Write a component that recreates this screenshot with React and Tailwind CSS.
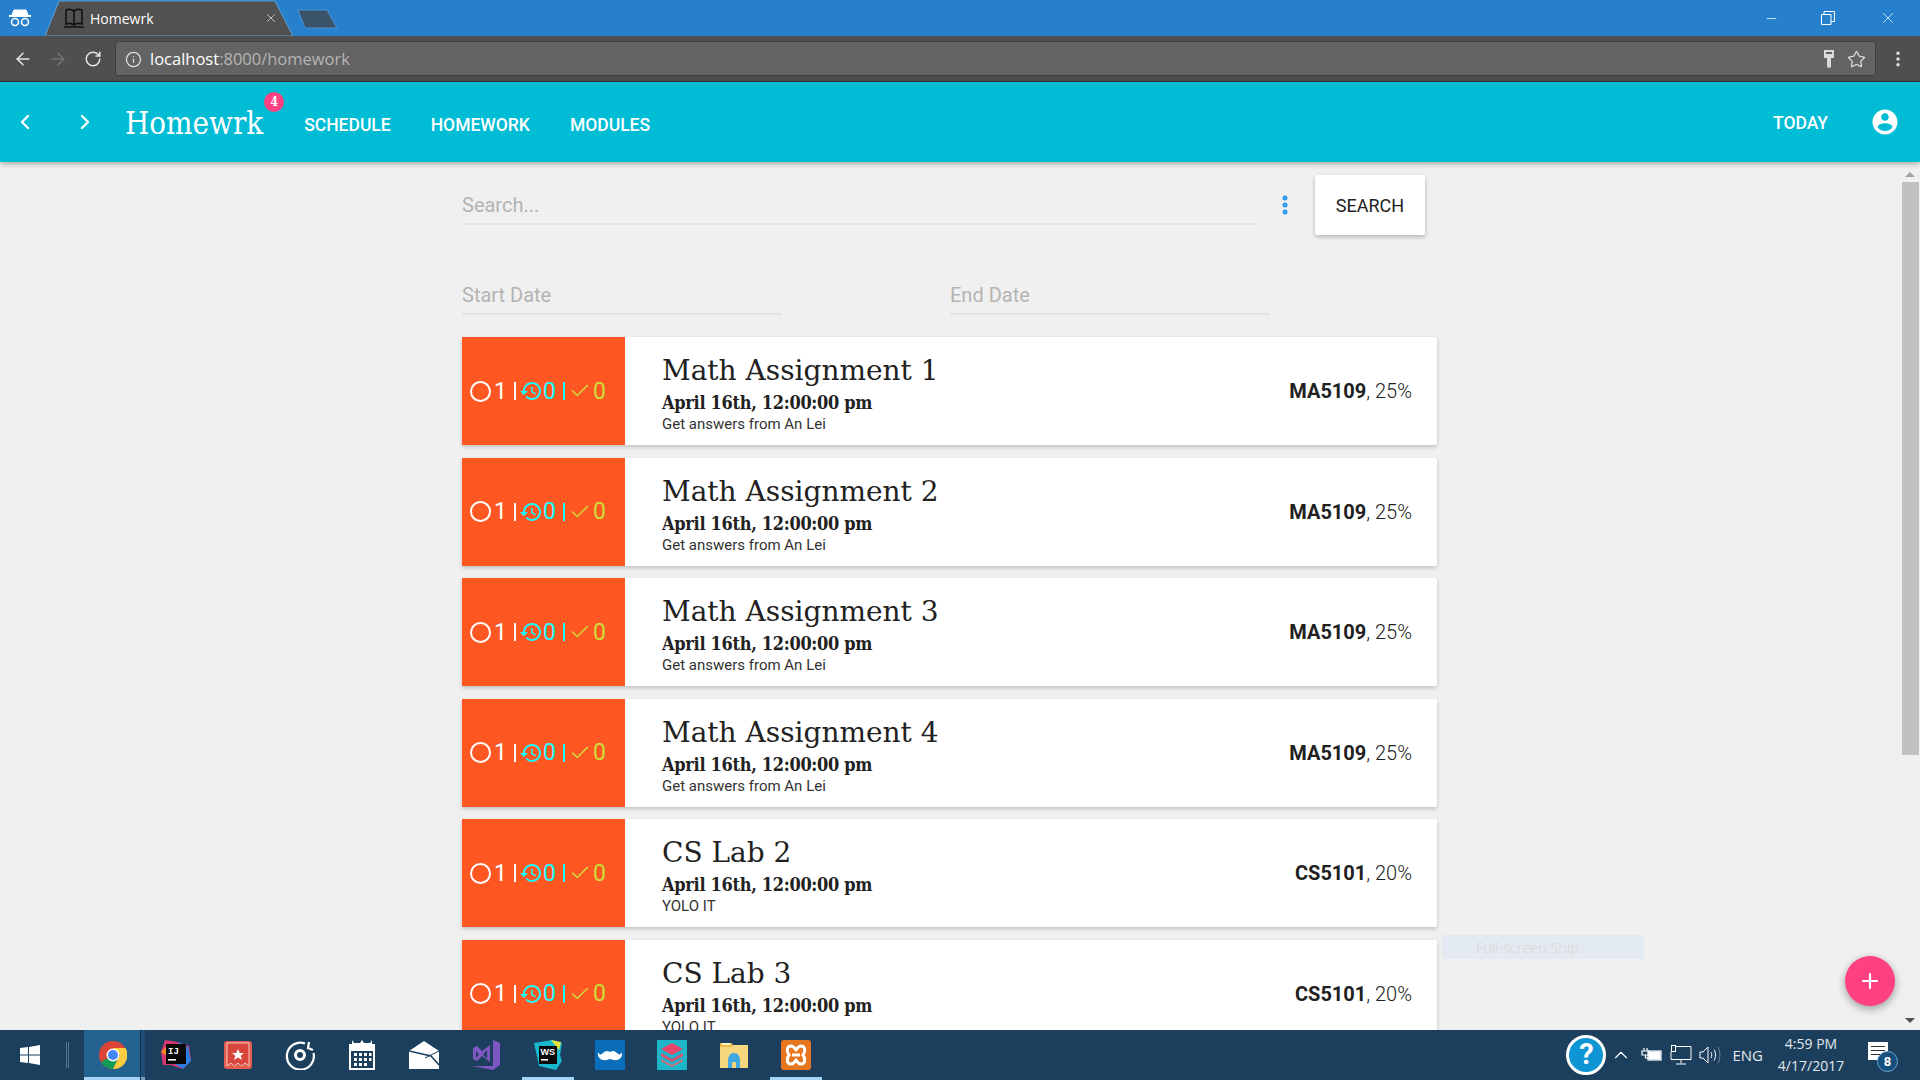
import { ChevronLeft, ChevronRight, ArrowLeft, ArrowRight, RotateCw, Info, Star, EllipsisVertical, X, Minus, Plus, ChevronUp, Check } from 'lucide-react';

const SLAB = "font-['DejaVu_Serif',serif]";
const SLAB_NARROW = "font-['DejaVu_Serif',serif] [font-stretch:condensed]";

const ASSIGNMENTS = [
  { title: 'Math Assignment 1', note: 'Get answers from An Lei', code: 'MA5109', weight: '25%' },
  { title: 'Math Assignment 2', note: 'Get answers from An Lei', code: 'MA5109', weight: '25%' },
  { title: 'Math Assignment 3', note: 'Get answers from An Lei', code: 'MA5109', weight: '25%' },
  { title: 'Math Assignment 4', note: 'Get answers from An Lei', code: 'MA5109', weight: '25%' },
  { title: 'CS Lab 2', note: 'YOLO IT', code: 'CS5101', weight: '20%' },
  { title: 'CS Lab 3', note: 'YOLO IT', code: 'CS5101', weight: '20%' },
];

function HistoryIcon({ className }) {
  return (
    <svg className={className} viewBox="1 3 21 18" fill="currentColor">
      <path d="M13 3c-4.97 0-9 4.03-9 9H1l3.89 3.89.07.14L9 12H6c0-3.87 3.13-7 7-7s7 3.13 7 7-3.13 7-7 7c-1.93 0-3.68-.79-4.94-2.06l-1.42 1.42C8.27 19.99 10.51 21 13 21c4.97 0 9-4.03 9-9s-4.03-9-9-9zm-1 5v5l4.28 2.54.72-1.21-3.5-2.08V8H12z" />
    </svg>
  );
}

function Card({ item }) {
  return (
    <div className="flex h-[108px] shrink-0 rounded-[2px] bg-white shadow-[0_2px_4px_rgba(0,0,0,0.2)]">
      <div className="flex w-[163px] shrink-0 items-center bg-[#ff5722] pl-[8px] text-[23px] leading-none">
        <span className="h-[21px] w-[21px] rounded-full border-2 border-white" />
        <span className="ml-[3px] w-[13px] text-white">1</span>
        <span className="ml-[7px] h-[18px] w-[2px] bg-white" />
        <HistoryIcon className="ml-[4px] h-[18px] w-[21px] text-[#18ffff]" />
        <span className="ml-[2px] w-[13px] text-[#18ffff]">0</span>
        <span className="ml-[7px] h-[18px] w-[2px] bg-[#18ffff]" />
        <Check className="ml-[4px] h-[22px] w-[22px] text-[#cddc39]" strokeWidth={1.6} />
        <span className="ml-[2px] text-[#cddc39]">0</span>
      </div>
      <div className="flex min-w-0 flex-1 flex-col pl-[37px] pt-[17px]">
        <div className={`${SLAB} text-[28px] leading-[34px] text-[#212121]`}>{item.title}</div>
        <div className={`${SLAB_NARROW} mt-[3px] text-[18px] font-bold leading-[24px] tracking-[-0.3px] text-[#212121]`}>April 16th, 12:00:00 pm</div>
        <div className="text-[15px] leading-[18px] text-[#333]">{item.note}</div>
      </div>
      <div className="flex items-center pr-[25px] text-[20px] text-[#212121]">
        <span className="font-bold">{item.code}</span>
        <span className="font-light">, {item.weight}</span>
      </div>
    </div>
  );
}

function TabStrip() {
  return (
    <div className="flex h-[36px] shrink-0 items-start bg-[#2780cc]">
      <svg className="ml-[8px] mt-[8px] h-[20px] w-[24px]" viewBox="0 0 24 20" fill="none" stroke="white">
        <path d="M6 2h12l2 5H4z" fill="white" />
        <path d="M1 8h22" strokeWidth="2" />
        <circle cx="7" cy="14" r="3.5" strokeWidth="1.5" />
        <circle cx="17" cy="14" r="3.5" strokeWidth="1.5" />
      </svg>
      <div className="relative ml-[13px] h-[36px] w-[248px]">
        <svg className="absolute inset-0 h-full w-full" viewBox="0 0 248 36">
          <path d="M0 36 L14 1 H230 L248 36 Z" fill="#515151" stroke="#5aa0dc" strokeWidth="1" />
        </svg>
        <div className="relative flex h-full items-center pl-[18px] pr-[15px]">
          <svg className="h-[22px] w-[22px]" viewBox="0 0 22 22" fill="none" stroke="#111" strokeWidth="1.6">
            <path d="M11 4C9 2.5 6 2 3 3v14c3-1 6-.5 8 1 2-1.5 5-2 8-1V3c-3-1-6-.5-8 1zM11 4v14M1 20h20" />
          </svg>
          <span className="ml-[5px] flex-1 font-['Open_Sans',sans-serif] text-[14px] text-white">Homewrk</span>
          <X className="h-[14px] w-[14px] text-[#cfcfcf]" strokeWidth={1.5} />
        </div>
      </div>
      <svg className="ml-[4px] mt-[9px] h-[20px] w-[42px]" viewBox="0 0 42 20">
        <path d="M1 1 H30 L40 19 H8 Z" fill="#3a5368" stroke="#4c92d2" strokeWidth="1" />
      </svg>
      <div className="ml-auto mr-[2px] flex h-[36px] items-center text-white">
        <div className="flex w-[54px] justify-center"><Minus className="h-[15px] w-[15px]" strokeWidth={1.2} /></div>
        <div className="flex w-[60px] justify-center">
          <svg className="h-[14px] w-[14px]" viewBox="0 0 14 14" fill="none" stroke="white" strokeWidth="1">
            <path d="M.5 3.5h9.5v10H.5zM3 3.5V.5h10.5v10H10" />
          </svg>
        </div>
        <div className="flex w-[60px] justify-center"><X className="h-[18px] w-[18px]" strokeWidth={1} /></div>
      </div>
    </div>
  );
}

function AddressBar() {
  return (
    <div className="flex h-[46px] shrink-0 items-center border-b border-[#333] bg-[#4f4f4f]">
      <ArrowLeft className="ml-[13px] h-[20px] w-[20px] text-[#e6e6e6]" strokeWidth={1.8} />
      <ArrowRight className="ml-[15px] h-[20px] w-[20px] text-[#747474]" strokeWidth={1.8} />
      <RotateCw className="ml-[16px] h-[18px] w-[18px] text-[#e6e6e6]" strokeWidth={2} />
      <div className="ml-[13px] flex h-[35px] flex-1 items-center rounded-[3px] border border-[#3e3e3e] bg-[#636363] pl-[9px] pr-[9px] pt-[1px] font-['Open_Sans',sans-serif] text-[16.5px]">
        <Info className="h-[17px] w-[17px] text-[#e0e0e0]" strokeWidth={1.8} />
        <span className="ml-[8px] text-white">localhost</span>
        <span className="text-[#b5b5b5]">:8000/homework</span>
        <svg className="ml-auto h-[20px] w-[12px]" viewBox="0 0 12 20" fill="#d8d8d8">
          <path d="M1 1h10v8H8v9l-2 1-2-1V9H1z" />
          <rect x="3" y="3" width="6" height="2" fill="#636363" />
        </svg>
        <Star className="ml-[12px] h-[19px] w-[19px] text-[#dcdcdc]" strokeWidth={1.6} />
      </div>
      <div className="flex w-[44px] justify-center">
        <EllipsisVertical className="h-[20px] w-[20px] text-[#e0e0e0]" strokeWidth={2.2} />
      </div>
    </div>
  );
}

function NavBar() {
  return (
    <div className="relative z-10 flex h-[80px] shrink-0 items-center bg-[#00bcd4] text-white shadow-[0_2px_5px_rgba(0,0,0,0.3)]">
      <ChevronLeft className="ml-[13px] h-[24px] w-[24px]" strokeWidth={2.4} />
      <ChevronRight className="ml-[36px] h-[24px] w-[24px]" strokeWidth={2.4} />
      <div className={`${SLAB_NARROW} relative ml-[28px] pt-[2px] text-[31px] leading-none`}>
        Homewrk
        <span className="absolute -right-[21px] -top-[14px] flex h-[20px] w-[20px] items-center justify-center rounded-full bg-[#ff4081] text-[12px] font-bold">4</span>
      </div>
      <div className="ml-[41px] flex items-center gap-[40px] pt-[7px] text-[17.5px] font-medium">
        <span>SCHEDULE</span>
        <span>HOMEWORK</span>
        <span>MODULES</span>
      </div>
      <span className="ml-auto pt-[3px] text-[17.5px] font-medium">TODAY</span>
      <svg className="ml-[42px] mr-[20px] h-[30px] w-[30px]" viewBox="0 0 24 24" fill="white">
        <path d="M12 2C6.48 2 2 6.48 2 12s4.48 10 10 10 10-4.48 10-10S17.52 2 12 2zm0 3c1.66 0 3 1.34 3 3s-1.34 3-3 3-3-1.34-3-3 1.34-3 3-3zm0 14.2c-2.5 0-4.71-1.28-6-3.22.03-1.99 4-3.08 6-3.08 1.99 0 5.97 1.09 6 3.08-1.29 1.94-3.5 3.22-6 3.22z" />
      </svg>
    </div>
  );
}

function Filters() {
  return (
    <>
      <div className="flex items-start">
        <div className="mt-[13px] flex h-[37px] w-[792px] items-center border-b-[2px] border-[#e2e2e2] pb-[2px] text-[20px] text-[#b4b4b4]">Search...</div>
        <EllipsisVertical className="ml-[19px] mt-[18px] h-[24px] w-[24px] text-[#2196f3]" strokeWidth={3} />
        <button className="ml-[18px] flex h-[60px] w-[110px] items-center justify-center rounded-[2px] bg-white pt-[1px] text-[18px] text-[#212121] shadow-[0_2px_4px_rgba(0,0,0,0.25)]">SEARCH</button>
      </div>
      <div className="mt-[44px] flex gap-[168px]">
        <div className="flex h-[36px] w-[320px] items-center border-b-[2px] border-[#e2e2e2] pb-[2px] text-[20px] text-[#b4b4b4]">Start Date</div>
        <div className="flex h-[36px] w-[320px] items-center border-b-[2px] border-[#e2e2e2] pb-[2px] text-[20px] text-[#b4b4b4]">End Date</div>
      </div>
    </>
  );
}

function Scrollbar() {
  return (
    <div className="flex w-[20px] shrink-0 flex-col items-center pt-[10px]">
      <span className="h-0 w-0 border-x-[5px] border-b-[5px] border-x-transparent border-b-[#a3a3a3]" />
      <div className="mt-[5px] h-[573px] w-[17px] bg-[#c1c1c1]" />
      <span className="mt-auto mb-[7px] h-0 w-0 border-x-[5px] border-t-[5px] border-x-transparent border-t-[#505050]" />
    </div>
  );
}

function TaskIcon({ children, active }) {
  return (
    <div className="relative flex h-full w-[62px] items-center justify-center">
      {children}
      {active && <span className="absolute bottom-0 left-[5px] right-[5px] h-[3px] bg-[#a6d2f5]" />}
    </div>
  );
}

function Taskbar() {
  return (
    <div className="relative z-20 flex h-[50px] shrink-0 items-center bg-[#1b3f5c] text-white">
      <svg className="ml-[20px] h-[20px] w-[20px]" viewBox="0 0 20 20" fill="white">
        <path d="M0 3l8-1v7.5H0zM9 2l11-2v9.5H9zM0 10.5h8V18l-8-1zM9 10.5h11V20L9 18z" />
      </svg>
      <span className="ml-[26px] h-[26px] w-[3px] border-x border-[#5a7488]" />
      <div className="relative ml-[15px] flex h-full w-[56px] items-center justify-center bg-[#24628f]">
        <svg className="ml-[2px] h-[28px] w-[28px]" viewBox="0 0 28 28">
          <circle cx="14" cy="14" r="14" fill="#db4437" />
          <path d="M14 14L2 21A14 14 0 0 0 14 28L21 14z" fill="#0f9d58" />
          <path d="M14 7H26.5A14 14 0 0 1 14 28L21 14z" fill="#ffcd40" />
          <circle cx="14" cy="14" r="6.5" fill="white" />
          <circle cx="14" cy="14" r="5" fill="#4285f4" />
        </svg>
        <span className="absolute bottom-0 left-0 right-0 h-[3px] bg-[#a6d2f5]" />
      </div>
      <div className="relative h-full w-[5px] border-l border-[#143049] bg-[#1f4f76]">
        <span className="absolute bottom-0 left-0 right-0 h-[3px] bg-[#7f9fba]" />
      </div>
      <TaskIcon>
        <svg className="h-[30px] w-[30px]" viewBox="0 0 30 30">
          <path d="M4 0l12 2 12 4 2 14-8 9-12-4H2L0 12z" fill="#d8366f" />
          <path d="M18 2l9 5 3 14-8 8-8-5z" fill="#2f7fe0" />
          <path d="M0 12l6-6v10z" fill="#f28a20" />
          <rect x="5" y="4" width="20" height="20" fill="#0a0a0a" />
          <text x="7" y="14" fill="white" fontSize="9" fontWeight="700" fontFamily="Liberation Mono">IJ</text>
          <rect x="7" y="19" width="8" height="1.6" fill="white" />
        </svg>
      </TaskIcon>
      <TaskIcon>
        <svg className="h-[28px] w-[28px]" viewBox="0 0 28 28">
          <rect width="28" height="28" rx="3" fill="#e45c50" />
          <path d="M3 2h22v23l-4-3-3.500 3-3.500-3-3.500 3-3.500-3-4 3z" fill="#d8453a" stroke="#f2c9c2" strokeWidth="1" />
          <path d="M14 8l1.800 4h4.200l-3.300 2.700 1.200 4.300-3.900-2.500-3.900 2.500 1.200-4.300L8 12h4.200z" fill="white" />
        </svg>
      </TaskIcon>
      <TaskIcon>
        <svg className="h-[30px] w-[30px]" viewBox="0 0 30 30" fill="none" stroke="white" strokeWidth="2.2">
          <path d="M20 3.500A13.500 13.500 0 1 0 28.500 13" />
          <path d="M24 2l-1 6 5 2" />
          <circle cx="15" cy="15" r="4.500" strokeWidth="3" />
        </svg>
      </TaskIcon>
      <TaskIcon>
        <svg className="h-[30px] w-[26px]" viewBox="0 0 26 30" fill="white">
          <path d="M0 4h3V0l2 3h6l2-3 2 3h6l2-3v4h3v26H0zM2 11v17h22V11z" />
          <path d="M5 13h3v3H5zM10 13h3v3h-3zM15 13h3v3h-3zM20 13h2.500v3H20zM5 18h3v3H5zM10 18h3v3h-3zM15 18h3v3h-3zM20 18h2.500v3H20zM5 23h3v3H5zM10 23h3v3h-3zM15 23h3v3h-3z" />
        </svg>
      </TaskIcon>
      <TaskIcon>
        <svg className="h-[28px] w-[30px]" viewBox="0 0 30 28">
          <path d="M15 0L30 10V28H0V10Z" fill="white" />
          <path d="M0 10L22 15 30 24" fill="none" stroke="#1b3f5c" strokeWidth="1.500" />
          <path d="M30 10L16 17" fill="none" stroke="#1b3f5c" strokeWidth="1" />
        </svg>
      </TaskIcon>
      <TaskIcon>
        <svg className="h-[30px] w-[30px]" viewBox="0 0 30 30" fill="#7e57c2">
          <path d="M22 0l7 3v22l-7 5-21-4 21 0zM2 8l4-2 5 5 8-6v17l-8-6-5 5-4-2zM5 11v7l3-3.500zM16 10l-4 4.500 4 4.500z" fillRule="evenodd" />
        </svg>
      </TaskIcon>
      <TaskIcon active>
        <svg className="h-[30px] w-[30px]" viewBox="0 0 30 30">
          <path d="M1 3l18-3 10 3-2 12 2 6-6 9-17-4z" fill="#19b8cf" />
          <path d="M18 0l10 2-2 8z" fill="#e8e23c" />
          <rect x="6" y="6" width="18" height="18" fill="#0a0a0a" />
          <text x="7.500" y="15" fill="white" fontSize="9" fontWeight="700" fontFamily="Liberation Sans">WS</text>
          <rect x="8" y="19" width="7" height="1.600" fill="white" />
        </svg>
      </TaskIcon>
      <TaskIcon>
        <svg className="h-[30px] w-[30px]" viewBox="0 0 30 30">
          <rect width="30" height="30" fill="#0a6dba" />
          <path d="M3 12c1 3 3 3 5 1 2-2 4-3 7-1 3-2 5-1 7 1 2 2 4 2 5-1 1 6-4 9-8 8-2 0-3-1-4-1s-2 1-4 1c-4 1-9-2-8-8z" fill="white" />
        </svg>
      </TaskIcon>
      <TaskIcon>
        <svg className="h-[30px] w-[30px]" viewBox="0 0 30 30">
          <rect width="30" height="30" fill="#1cb6c9" />
          <path d="M15 3l11 6-11 6-11-6z" fill="#e8466d" />
          <path d="M4 13l11 6 11-6v3l-11 6-11-6z" fill="#d8506f" />
          <path d="M4 19l11 6 11-6v2l-11 6-11-6z" fill="#d86a80" />
        </svg>
      </TaskIcon>
      <TaskIcon>
        <svg className="h-[28px] w-[28px]" viewBox="0 0 28 28">
          <path d="M0 2h11l2 2h15v23H0z" fill="#f6d77e" />
          <path d="M0 2h12v4H0z" fill="#e9b949" />
          <rect x="2" y="2" width="8" height="2" fill="#fff3c9" />
          <path d="M8 20c0-5 2-8 6-8s6 3 6 8v7h-4v-6h-4v6H8z" fill="#3fa8e0" />
        </svg>
      </TaskIcon>
      <TaskIcon active>
        <svg className="h-[30px] w-[30px]" viewBox="0 0 30 30">
          <rect width="30" height="30" rx="3" fill="#e8761e" />
          <path d="M10 6c3 0 4 3 5 4 1-1 2-4 5-4 4 0 5 5 2 9 3 4 2 9-2 9-3 0-4-3-5-4-1 1-2 4-5 4-4 0-5-5-2-9-3-4-2-9 2-9z" fill="none" stroke="white" strokeWidth="3" />
          <path d="M11 15h8" stroke="white" strokeWidth="3" />
        </svg>
      </TaskIcon>

      <div className="ml-auto flex h-full items-center">
        <div className="flex h-[40px] w-[40px] items-center justify-center rounded-full border-[3px] border-white bg-[#0e95d4] text-[29px] font-bold">?</div>
        <ChevronUp className="ml-[4px] h-[22px] w-[22px]" strokeWidth={1.2} />
        <svg className="ml-[8px] h-[16px] w-[22px]" viewBox="0 0 22 16" fill="none" stroke="white" strokeWidth="1.2">
          <path d="M4 1v3M7 1v3M2 4h7v4H2zM5.500 8v3h3" />
          <rect x="8" y="4" width="13" height="9" />
          <rect x="9" y="5" width="11" height="7" fill="white" />
        </svg>
        <svg className="ml-[8px] h-[22px] w-[22px]" viewBox="0 0 22 22" fill="none" stroke="white" strokeWidth="1">
          <path d="M5 2.500h16v13H1v-8M11 15.500v4M6 20h10" />
          <rect x="1.500" y="1.500" width="4" height="6" />
        </svg>
        <svg className="ml-[7px] h-[20px] w-[22px]" viewBox="0 0 22 20" fill="none" stroke="white" strokeWidth="1">
          <path d="M1 7h3l5-5v16l-5-5H1z" />
          <path d="M12 7c1 2 1 4 0 6M15 4.500c2 3 2 8 0 11" />
          <path d="M19 2c2.500 4 2.500 12 0 16" stroke="#6c8599" />
        </svg>
        <span className="ml-[11px] font-['Open_Sans',sans-serif] text-[15px] text-[#e4e8ec]">ENG</span>
        <div className="ml-[14px] flex w-[68px] flex-col items-center font-['Open_Sans',sans-serif] text-[14px] leading-[22px] text-[#e4e8ec]">
          <span>4:59 PM</span>
          <span>4/17/2017</span>
        </div>
        <div className="relative ml-[23px] mr-[32px] -mt-[8px] h-[18px] w-[20px] bg-white">
          <span className="absolute left-[3px] top-[4px] h-[1px] w-[14px] bg-[#333]" />
          <span className="absolute left-[3px] top-[8px] h-[1px] w-[14px] bg-[#333]" />
          <span className="absolute left-[3px] top-[12px] h-[1px] w-[9px] bg-[#333]" />
          <span className="absolute -bottom-[12px] -right-[10px] flex h-[21px] w-[21px] items-center justify-center rounded-full border border-[#6fa5cf] bg-[#15507e] text-[13px] font-bold">8</span>
        </div>
      </div>
    </div>
  );
}

export default function App() {
  return (
    <div className="flex h-screen w-screen flex-col overflow-hidden bg-[#f0f0f0] font-['Roboto',sans-serif]">
      <TabStrip />
      <AddressBar />
      <NavBar />
      <div className="relative flex min-h-0 flex-1">
        <div className="flex-1 overflow-hidden pl-[462px] pt-[13px]">
          <div className="flex w-[975px] flex-col">
            <Filters />
            <div className="mt-[22px] flex flex-col gap-[12.5px]">
              {ASSIGNMENTS.map(item => <Card key={item.title} item={item} />)}
            </div>
          </div>
        </div>
        <div className="absolute left-[1442px] top-[773px] flex h-[24px] w-[202px] items-center bg-[#e3eaf2] pl-[34px] font-['Open_Sans',sans-serif] text-[14px] text-[#dcdcdc]">Full-screen Snip</div>
        <button className="absolute left-[1845px] top-[794px] flex h-[50px] w-[50px] items-center justify-center rounded-full bg-[#ff4081] text-white shadow-[0_3px_8px_rgba(0,0,0,0.35)]">
          <Plus className="h-[24px] w-[24px]" strokeWidth={2.2} />
        </button>
        <Scrollbar />
      </div>
      <Taskbar />
    </div>
  );
}
